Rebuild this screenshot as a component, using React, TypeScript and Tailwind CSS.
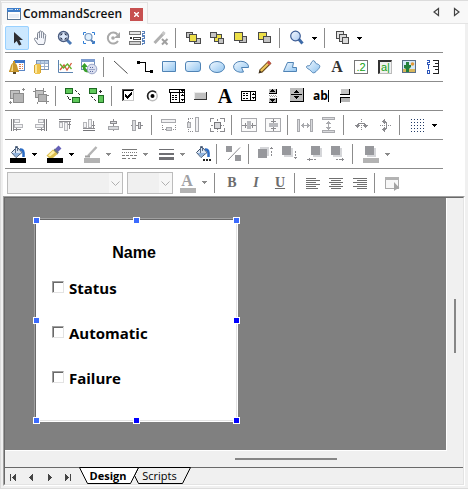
import type { ReactNode } from "react";

type BoxProps = { x: number; y: number; w: number; h: number; s: string; f: string };

/* Outlined rectangle on whole pixels */
function Box({ x, y, w, h, s, f }: BoxProps) {
  return (
    <>
      <rect x={x} y={y} width={w} height={h} fill={s} />
      <rect x={x + 1} y={y + 1} width={w - 2} height={h - 2} fill={f} />
    </>
  );
}

function Fill({ d, c }: { d: string; c: string }) {
  return <path d={d} fill={c} />;
}

function Line({ d, c, w = 1, dash }: { d: string; c: string; w?: number; dash?: string }) {
  return <path d={d} fill="none" stroke={c} strokeWidth={w} strokeDasharray={dash} />;
}

function Glyph({ children, smooth = false }: { children: ReactNode; smooth?: boolean }) {
  return (
    <svg
      viewBox="0 0 24 24"
      className="block size-6"
      shapeRendering={smooth ? "auto" : "crispEdges"}
      aria-hidden="true"
    >
      {children}
    </svg>
  );
}

function Tool({ label, active = false, children }: { label: string; active?: boolean; children: ReactNode }) {
  return (
    <button
      type="button"
      title={label}
      aria-label={label}
      className={
        active
          ? "size-6 shrink-0 rounded-xs bg-[#cce8ff] outline-1 -outline-offset-1 outline-[#99d1ff]"
          : "size-6 shrink-0"
      }
    >
      {children}
    </button>
  );
}

function Drop({ label, dim = false }: { label: string; dim?: boolean }) {
  return (
    <button type="button" aria-label={label} className="flex h-6 w-[13px] shrink-0 items-center pl-[3px]">
      <svg viewBox="0 0 5 3" className="block h-[3px] w-[5px]" shapeRendering="crispEdges" aria-hidden="true">
        <path d="M0 0H5V1H4V2H3V3H2V2H1V1H0Z" fill={dim ? "#8a8a8a" : "#000"} />
      </svg>
    </button>
  );
}

function Sep() {
  return <span className="ml-0.5 mr-[5px] h-5 w-px shrink-0 bg-[#8c8c8c]" />;
}

function Row({ children, last = false }: { children: ReactNode; last?: boolean }) {
  return (
    <div
      className={
        last
          ? "ml-0.5 mr-[22px] flex h-[27px] items-center"
          : "ml-0.5 mr-[22px] flex h-[29px] items-center border-b border-[#8c8c8c]"
      }
    >
      {children}
    </div>
  );
}

const Y = "#ecdf48";
const G = "#c4c4c4";
const D = "#4a4a4a";
const M = "#8b8b8f";
const L = "#d9dadd";
const BLUE = "#4f83b5";

function Lens({ x, y, r, tip }: { x: number; y: number; r: number; tip: number }) {
  return (
    <>
      <Line d={`M${x + r * 0.7} ${y + r * 0.7}L${tip} ${tip}`} c="#3d6aa8" w={3} />
      <circle cx={x} cy={y} r={r} fill="url(#lens)" stroke="#3c5c94" strokeWidth="1.2" />
    </>
  );
}

function Bucket({ children }: { children?: ReactNode }) {
  return (
    <Glyph smooth>
      <path d="M6.500 10.500L12 5L17 10.500L11 15.500Z" fill="#dbe6f5" stroke="#3a4d68" />
      <path d="M7.500 11H16L11 15Z" fill="#8fb2dc" />
      <Line d="M10.500 11V4.500H12.500V9" c="#5b6d86" />
      <Line d="M15 7.500C18 7 19 9 18.500 15" c="#2c6cc4" w={2.5} />
      {children}
    </Glyph>
  );
}

function Stack({ back, front, fb, ff }: { back: number[][]; front: number[][]; fb: string; ff: string }) {
  return (
    <Glyph>
      {back.map(([x, y, w, h]) => (
        <Box key={`b${x}`} x={x} y={y} w={w} h={h} s={D} f={fb} />
      ))}
      {front.map(([x, y, w, h]) => (
        <Box key={`f${x}`} x={x} y={y} w={w} h={h} s={D} f={ff} />
      ))}
    </Glyph>
  );
}

function Curve({ d }: { d: string }) {
  return (
    <Glyph smooth>
      <path d={d} fill="url(#sky)" stroke={BLUE} />
    </Glyph>
  );
}

function Lines({ rows }: { rows: number[][] }) {
  return (
    <Glyph>
      {rows.map(([x, w], i) => (
        <rect key={i} x={x} y={7 + i * 2} width={w} height="1" fill="#6f6f6f" />
      ))}
    </Glyph>
  );
}

function Turn({ children }: { children: ReactNode }) {
  return (
    <Glyph>
      <g transform="rotate(90 12 12)">{children}</g>
    </Glyph>
  );
}

function StandardRow() {
  return (
    <Row>
      <Tool label="Select" active>
        <Glyph smooth>
          <Fill d="M9 6V17.500L11.700 15L14 19.500L16.500 18.500L14.300 14H18Z" c="#2e2e33" />
        </Glyph>
      </Tool>
      <Tool label="Pan">
        <Glyph smooth>
          <path
            d="M9 18.500L5.500 13.500C5 12 6.500 11.500 7.500 12.500L8.500 13.500V7.500C8.500 6 10.300 6 10.400 7.500V6C10.500 4.500 12.500 4.500 12.500 6V6.500C12.700 5.300 14.500 5.500 14.500 7V8.500C15 7.500 16.800 7.800 16.700 9.500L16 15.500L15 18.500Z"
            fill="#f4f6fb"
            stroke="#7d8492"
          />
          <Line d="M10.500 7.500V12M12.500 6.500V12M14.500 8V12.500" c="#8b92a0" />
        </Glyph>
      </Tool>
      <Tool label="Zoom to fit">
        <Glyph smooth>
          <Line d="M14 14L18 18" c="#4a78b4" w={3} />
          <circle cx="10.500" cy="10.500" r="5" fill="#dce8fa" stroke="#4a5c80" strokeWidth="1.400" />
          <Fill d="M7.500 7.500H10L7.500 10ZM13.500 7.500V10L11 7.500ZM7.500 13.500V11L10 13.500ZM13.500 13.500H11L13.500 11Z" c="#16213c" />
        </Glyph>
      </Tool>
      <Tool label="Zoom to selection">
        <Glyph smooth>
          <Line d="M6.500 9V6.500H9M15 6.500H17.500V9M6.500 15V17.500H9M15 17.500H17.500V15" c="#2f7fd8" />
          <Line d="M13.500 13.500L17 17" c="#4a78b4" w={2} />
          <circle cx="11.500" cy="11" r="3.500" fill="#e0effc" stroke="#7596bf" strokeWidth="1.200" />
        </Glyph>
      </Tool>
      <Tool label="Rotate">
        <Glyph smooth>
          <Line d="M16.500 8.500A5.500 5.500 0 1 0 17 15" c="#a9a9a9" w={2} />
          <Fill d="M19 6V12H13Z" c="#a9a9a9" />
          <circle cx="12" cy="12" r="1.800" fill="#a9a9a9" />
        </Glyph>
      </Tool>
      <Tool label="Tab order">
        <Glyph>
          <Box x={4} y={5} w={12} h={4} s="#777" f="#e8e8e8" />
          <Box x={8} y={11} w={8} h={3} s="#444" f="#fff" />
          <rect x="5" y="11" width="2" height="2" fill="#333" />
          <Box x={4} y={15} w={12} h={4} s="#777" f="#d0d0d0" />
          <Line d="M17 5.500H19.500V7.500H17.500V9.500H20M17 10.500H19.500V12.500H17.500V14.500H20M17 15.500H19.500V17.500H17.500V19" c="#5b83bd" />
        </Glyph>
      </Tool>
      <Tool label="Clear format">
        <Glyph smooth>
          <Line d="M5.500 17L15 7" c="#b0b0b0" w={3} />
          <Line d="M13.500 8.500L15.500 6" c="#c9c9c9" w={3} />
          <Line d="M13 13L18.500 18.500M18.500 13L13 18.500" c="#a0a0a0" w={2} />
        </Glyph>
      </Tool>
      <Sep />
      <Tool label="Bring to front">
        <Stack back={[[5, 6, 7, 6], [13, 12, 7, 6]]} front={[[8, 8, 8, 8]]} fb={G} ff={Y} />
      </Tool>
      <Tool label="Send to back">
        <Stack back={[[9, 8, 8, 8]]} front={[[5, 6, 7, 6], [13, 12, 6, 6]]} fb={Y} ff={G} />
      </Tool>
      <Tool label="Bring forward">
        <Stack back={[[10, 10, 8, 7]]} front={[[5, 6, 9, 9]]} fb={G} ff={Y} />
      </Tool>
      <Tool label="Send backward">
        <Stack back={[[5, 6, 9, 8]]} front={[[10, 10, 8, 7]]} fb={Y} ff={G} />
      </Tool>
      <Sep />
      <Tool label="Zoom">
        <Glyph smooth>
          <Lens x={10.5} y={10} r={4.8} tip={17.5} />
        </Glyph>
      </Tool>
      <Drop label="Zoom options" />
      <Sep />
      <Tool label="Layers">
        <Stack back={[[6, 5, 8, 8]]} front={[[9, 8, 8, 8], [12, 11, 7, 7]]} fb="#e3e3e3" ff="#dadada" />
      </Tool>
      <Drop label="Layer options" />
    </Row>
  );
}

function DrawingRow() {
  return (
    <Row>
      <Tool label="Alarm view">
        <Glyph smooth>
          <Box x={9} y={5} w={11} h={11} s="#5b86c6" f="#fff" />
          <rect x="9" y="5" width="11" height="3" fill="#3c73c8" />
          <Line d="M14 9.500H18M14 11.500H18M14 13.500H18" c="#e08050" dash="2 1" />
          <Fill d="M8 6H10V8C13 9 12 14 14 16V17H4V16C6 14 5 9 8 8Z" c="#c8962c" />
          <Fill d="M8 8C7 10 7 13 6 16H8Z" c="#f6dc84" />
          <rect x="8" y="17" width="3" height="2" fill="#5a4a28" />
        </Glyph>
      </Tool>
      <Tool label="Table view">
        <Glyph>
          <Box x={7} y={5} w={13} h={10} s="#7b93b5" f="#fff" />
          <rect x="8" y="6" width="11" height="2" fill="#b9cfe8" />
          <Line d="M8 8.500H19M8 11.500H19M11.500 6V14M15.500 6V14" c="#9db0cb" />
          <rect x="5" y="10" width="7" height="8" fill="#d7a52e" />
          <rect x="6" y="9" width="5" height="10" fill="#efc34c" />
          <rect x="6" y="10" width="2" height="8" fill="#fbe79f" />
        </Glyph>
      </Tool>
      <Tool label="Trend view">
        <Glyph smooth>
          <Line d="M5.500 5V17.500H20" c="#5b83b0" />
          <Line d="M7 15L11 10L14 15L18.500 8" c="#d65a3c" w={1.3} />
          <Line d="M7 9L10.500 13L14.500 9L18.500 14" c="#62b02a" w={1.3} />
        </Glyph>
      </Tool>
      <Tool label="Recipe view">
        <Glyph smooth>
          <Box x={4} y={4} w={14} h={11} s="#6f8db8" f="#fff" />
          <rect x="4" y="4" width="14" height="3" fill="#7d9cd0" />
          <Line d="M7 11C7 16 9 16 12 16" c="#38a028" w={3} />
          <Fill d="M4 12L7.500 8L11 12Z" c="#38a028" />
          <circle cx="15" cy="14" r="4.800" fill="#dadff0" stroke="#9ba5c8" />
          <Line d="M13 12.500H17M12.500 14.500H18M13 16.500H17" c="#5d6aa0" dash="1 1" />
        </Glyph>
      </Tool>
      <Sep />
      <Tool label="Line">
        <Glyph smooth>
          <Line d="M5 6L18.500 18.500" c="#505050" />
        </Glyph>
      </Tool>
      <Tool label="Connector">
        <Glyph>
          <Line d="M5 7.500H12.500V16.500H19" c="#000" />
          <Fill d="M4 6H7V9H4ZM17 15H20V18H17Z" c="#000" />
        </Glyph>
      </Tool>
      <Tool label="Rectangle"><Curve d="M5.500 6.500H18.500V16.500H5.500Z" /></Tool>
      <Tool label="Rounded rectangle">
        <Curve d="M7 6.500H17Q19.500 6.500 19.500 9V14Q19.500 16.500 17 16.500H7Q4.500 16.500 4.500 14V9Q4.500 6.500 7 6.500Z" />
      </Tool>
      <Tool label="Ellipse"><Curve d="M4.500 12A7.500 5.500 0 1 1 19.500 12A7.500 5.500 0 1 1 4.500 12Z" /></Tool>
      <Tool label="Pie"><Curve d="M12.500 12.500L14.500 17A7.500 5.500 0 1 1 19.500 12.500Z" /></Tool>
      <Tool label="Pencil">
        <Glyph smooth>
          <Line d="M7.500 16.500L17 7" c="#6b4a1c" w={4} />
          <Line d="M7.800 16L15.500 8.300" c="#f0c95c" w={2.2} />
          <Line d="M15 9L17 7" c="#c8524a" w={3.5} />
          <Fill d="M5.500 18.500L6.500 15L9 17.500Z" c="#3c2c18" />
        </Glyph>
      </Tool>
      <Tool label="Polygon"><Curve d="M6.500 16.500L10.500 7.500H16.500L15.500 12.500H19.500V16.500Z" /></Tool>
      <Tool label="Freeform">
        <Curve d="M5.500 11.500C6 10 8 12 9.500 9.500C11 5.500 13 4.500 14 7C14.500 9 16 8.500 17.500 9.500C20 11 18.500 13 16 15.500C13 19 11.500 18 10 16C8.500 14 5 13.500 5.500 11.500Z" />
      </Tool>
      <Tool label="Text">
        <span className="block font-['Liberation_Serif',serif] text-base leading-6 font-bold text-[#333]">A</span>
      </Tool>
      <Tool label="Numeric display">
        <span className="mx-auto block h-[14px] w-[14px] border border-[#777] font-['Liberation_Sans',sans-serif] text-[11px] leading-3 text-[#12a012]">
          .2
        </span>
      </Tool>
      <Tool label="Alphanumeric display">
        <span className="mx-auto block h-[14px] w-[14px] border border-t-2 border-l-2 border-[#bbb] border-t-[#333] border-l-[#333] bg-[#f0f0f0] font-['Liberation_Sans',sans-serif] text-[11px] leading-[10px] text-[#12a012]">
          a|
        </span>
      </Tool>
      <Tool label="Picture">
        <Glyph smooth>
          <Box x={5} y={5} w={14} h={13} s="#5a6f88" f="#d4e8f8" />
          <rect x="6" y="14" width="12" height="3" fill="#d8b65c" />
          <Fill d="M9 7H12V10H14V12L12 14V17H9V14L7 13V10H9Z" c="#23803c" />
          <circle cx="15.500" cy="9" r="1.800" fill="#e49a38" />
        </Glyph>
      </Tool>
      <Tool label="Scale">
        <Glyph>
          <Line d="M6 5.500H8.500V7.500H6.500V9H9M7.500 10V14M6 15.500H8.500V18.500H6.500V15" c="#2c55b8" />
          <Line d="M17.500 5V19M12 5.500H18M14 8.500H18M12 11.500H18M14 14.500H18M12 18.500H18" c="#222" />
        </Glyph>
      </Tool>
    </Row>
  );
}

function ControlsRow() {
  return (
    <Row>
      <Tool label="Group">
        <Glyph>
          <Box x={5} y={6} w={10} h={9} s="#8c8c8c" f="#c2c2c2" />
          <Box x={8} y={9} w={11} h={10} s="#8c8c8c" f="#b4b4b4" />
          <Fill d="M17 5H20V6H17ZM18 4H19V7H18ZM4 18H7V19H4ZM5 17H6V20H5Z" c="#8c8c8c" />
        </Glyph>
      </Tool>
      <Tool label="Ungroup">
        <Glyph>
          <Box x={6} y={6} w={9} h={8} s="#8c8c8c" f="#c2c2c2" />
          <Box x={9} y={10} w={9} h={8} s="#8c8c8c" f="#b4b4b4" />
          <Fill d="M4 7H6V8H4ZM6 4H7V6H6ZM14 4H15V6H14ZM15 7H17V8H15ZM18 11H20V12H18ZM17 18H18V20H17ZM18 17H20V18H18ZM8 18H9V20H8Z" c="#8c8c8c" />
        </Glyph>
      </Tool>
      <Sep />
      <Tool label="Replace">
        <Glyph>
          <Line d="M14 6L19 11M6 12L11 18" c="#333" dash="1 1" />
          <Box x={4} y={4} w={8} h={6} s="#1f6a24" f="#5fc85a" />
          <Box x={11} y={13} w={8} h={6} s="#1f6a24" f="#5fc85a" />
        </Glyph>
      </Tool>
      <Tool label="Duplicate">
        <Glyph>
          <Line d="M6 12L12 18" c="#333" dash="1 1" />
          <Box x={4} y={4} w={8} h={6} s="#1f6a24" f="#5fc85a" />
          <Box x={13} y={11} w={6} h={8} s="#1f6a24" f="#5fc85a" />
          <Fill d="M14 7H17V8H14ZM15 6H16V9H15Z" c="#333" />
        </Glyph>
      </Tool>
      <Sep />
      <Tool label="Check box">
        <Glyph>
          <Box x={5} y={5} w={12} h={12} s="#c8c8c8" f="#fff" />
          <Fill d="M5 5H17V6H6V17H5Z" c="#555" />
          <Fill d="M6 6H16V7H7V16H6Z" c="#000" />
          <Line d="M8 10.500L10.500 13.500L15 8.500" c="#000" w={2} />
        </Glyph>
      </Tool>
      <Tool label="Option button">
        <Glyph smooth>
          <circle cx="11.500" cy="12" r="4.700" fill="#fff" stroke="#bdbdbd" strokeWidth="1.500" />
          <Line d="M8 15.500A4.800 4.800 0 0 1 15 8.500" c="#222" w={1.6} />
          <circle cx="11.500" cy="12" r="2" fill="#000" />
        </Glyph>
      </Tool>
      <Tool label="Combo box">
        <Glyph>
          <Box x={4} y={5} w={16} h={4} s="#000" f="#fff" />
          <Box x={5} y={8} w={15} h={11} s="#000" f="#fff" />
          <rect x="14" y="5" width="1" height="13" fill="#000" />
          <Line d="M7 11.500H12M7 13.500H12M7 15.500H12" c="#000" dash="2 1" />
          <Fill d="M16 6H19V7H18V8H17V7H16ZM17 10H18V11H19V12H16V11H17ZM16 15H19V16H18V17H17V16H16Z" c="#000" />
        </Glyph>
      </Tool>
      <Tool label="Button">
        <Glyph>
          <rect x="5" y="8" width="13" height="8" fill="#333" />
          <rect x="5" y="8" width="12" height="7" fill="#ececec" />
          <rect x="6" y="9" width="11" height="6" fill="#c0c0c0" />
        </Glyph>
      </Tool>
      <Tool label="Label">
        <span className="block font-['Liberation_Serif',serif] text-xl leading-6 font-bold text-black">A</span>
      </Tool>
      <Tool label="List box">
        <Glyph>
          <Box x={4} y={7} w={15} h={10} s="#000" f="#fff" />
          <rect x="13" y="7" width="1" height="10" fill="#000" />
          <Line d="M6 9.500H12M6 11.500H12M6 14.500H12" c="#000" dash="2 1" />
          <Fill d="M16 9H17V10H18V11H15V10H16ZM15 13H18V14H17V15H16V14H15Z" c="#000" />
        </Glyph>
      </Tool>
      <Tool label="Scroll bar">
        <Glyph>
          <rect x="8" y="5" width="8" height="5" fill="#b8b8b8" />
          <rect x="8" y="14" width="8" height="5" fill="#b8b8b8" />
          <Line d="M8 9.500H15.500V5M8 18.500H15.500V14" c="#000" />
          <Line d="M8 11.500H16M9 12.500H16" c="#999" dash="1 1" />
          <Fill d="M11 5H12V6H13V7H14V8H9V7H10V6H11ZM9 15H14V16H13V17H12V18H11V17H10V16H9Z" c="#000" />
        </Glyph>
      </Tool>
      <Tool label="Spin button">
        <Glyph>
          <rect x="5" y="4" width="14" height="14" fill="#000" />
          <rect x="5" y="4" width="13" height="13" fill="#bcbcbc" />
          <Fill d="M6 10H17V11H6ZM11 6H12V7H13V8H14V9H9V8H10V7H11ZM9 12H14V13H13V14H12V15H11V14H10V13H9Z" c="#000" />
        </Glyph>
      </Tool>
      <Tool label="Text box">
        <span className="flex h-6 items-center justify-center font-['Open_Sans',sans-serif] text-[12px] leading-6 font-bold text-black">
          ab
          <span className="h-3 w-px bg-black" />
        </span>
      </Tool>
      <Tool label="Toggle button">
        <Glyph>
          <rect x="8" y="5" width="9" height="5" fill="#c4c4c4" />
          <Line d="M7 10.500H16.500V5" c="#000" />
          <rect x="8" y="14" width="9" height="4" fill="#b4b4b4" />
          <Line d="M17 13.500H7.500V19" c="#000" />
        </Glyph>
      </Tool>
    </Row>
  );
}

function LeftEdge() {
  return (
    <>
      <Fill d="M6 6H7V18H6Z" c="#77777b" />
      <Fill d="M8 6H9V18H8Z" c={M} />
      <Box x={9} y={6} w={6} h={4} s="#b5b6ba" f="#f1f1f3" />
      <Box x={9} y={11} w={9} h={4} s="#b5b6ba" f="#f1f1f3" />
      <Fill d="M9 16H11V15H12V16H16V17H12V18H11V17H9Z" c={M} />
    </>
  );
}

function CenterEdge() {
  return (
    <>
      <Line d="M12.500 6V18" c="#8b8b8f" />
      <Box x={9} y={8} w={7} h={3} s="#8b8b8f" f={L} />
      <Box x={7} y={13} w={11} h={4} s="#a5a6aa" f={L} />
    </>
  );
}

function SameSize() {
  return (
    <>
      <Box x={4} y={6} w={15} h={4} s="#a9aaae" f="#f1f1f3" />
      <Line d="M5.500 12V18M18.500 12V18M6 16.500H18" c={M} dash="1 1" />
      <Box x={9} y={14} w={6} h={4} s="#a9aaae" f={L} />
    </>
  );
}

function BoxSpread() {
  return (
    <>
      <Box x={4} y={5} w={16} h={14} s="#a9aaae" f="#fafafa" />
      <rect x="10" y="8" width="4" height="8" fill="#b9babe" />
      <Line d="M5 12.500H10M14 12.500H19M8.500 10V15M15.500 10V15" c={M} />
    </>
  );
}

function Spacing() {
  return (
    <>
      <Box x={4} y={6} w={3} h={13} s="#a9aaae" f={L} />
      <Box x={17} y={6} w={3} h={13} s="#a9aaae" f={L} />
      <Fill d="M8 12H9V11H10V10H11V12H14V10H15V11H16V12H17V13H16V14H15V15H14V13H11V15H10V14H9V13H8Z" c="#a9aaae" />
    </>
  );
}

function Flip() {
  return (
    <>
      <Line d="M12.500 6V18" c={M} dash="1 1" />
      <Line d="M8.500 13V11.500H9.500V10.500H15.500V11.500H16.500V13" c={M} />
      <Fill d="M6 12H11V13H10V14H9V15H8V14H7V13H6ZM14 12H19V13H18V14H17V15H16V14H15V13H14Z" c={M} />
    </>
  );
}

function ArrangeRow() {
  const dots: ReactNode[] = [];
  for (let y = 0; y < 5; y++) {
    for (let x = 0; x < 5; x++) {
      dots.push(<rect key={`${x}-${y}`} x={6 + x * 3} y={6 + y * 3} width="1" height="1" fill="#223a66" />);
    }
  }
  return (
    <Row>
      <Tool label="Align left"><Glyph><LeftEdge /></Glyph></Tool>
      <Tool label="Align right"><Glyph><g transform="matrix(-1 0 0 1 24 0)"><LeftEdge /></g></Glyph></Tool>
      <Tool label="Align top"><Glyph><g transform="matrix(0 1 1 0 0 0)"><LeftEdge /></g></Glyph></Tool>
      <Tool label="Align bottom"><Glyph><g transform="matrix(0 -1 1 0 0 24)"><LeftEdge /></g></Glyph></Tool>
      <Tool label="Center horizontally"><Glyph><CenterEdge /></Glyph></Tool>
      <Tool label="Center vertically"><Turn><CenterEdge /></Turn></Tool>
      <Sep />
      <Tool label="Same width"><Glyph><SameSize /></Glyph></Tool>
      <Tool label="Same height"><Turn><SameSize /></Turn></Tool>
      <Tool label="Same size">
        <Glyph>
          <Line d="M5.500 9V5.500H9M15 5.500H19.500V9M5.500 15V18.500H9M15 18.500H19.500V15" c={M} />
          <Line d="M12.500 6V19M6 12.500H19" c={M} dash="2 1" />
          <Box x={9} y={9} w={7} h={7} s="#77777b" f={L} />
        </Glyph>
      </Tool>
      <Sep />
      <Tool label="Center in window horizontally"><Glyph><BoxSpread /></Glyph></Tool>
      <Tool label="Center in window vertically">
        <Glyph>
          <Box x={4} y={5} w={16} h={14} s="#a9aaae" f="#fafafa" />
          <rect x="8" y="10" width="9" height="4" fill="#b9babe" />
          <Line d="M12.500 6V10M12.500 14V18M10 8.500H15M10 15.500H15" c={M} />
        </Glyph>
      </Tool>
      <Sep />
      <Tool label="Space evenly across"><Glyph><Spacing /></Glyph></Tool>
      <Tool label="Space evenly down"><Turn><Spacing /></Turn></Tool>
      <Sep />
      <Tool label="Flip horizontally"><Glyph><Flip /></Glyph></Tool>
      <Tool label="Flip vertically">
        <Glyph>
          <g transform="rotate(90 12 12)">
            <Flip />
          </g>
        </Glyph>
      </Tool>
      <Sep />
      <Tool label="Grid"><Glyph>{dots}</Glyph></Tool>
      <Drop label="Grid options" />
    </Row>
  );
}

function OrderIcon({ x, y, arrow, children }: { x: number; y: number; arrow?: string; children?: ReactNode }) {
  return (
    <Glyph>
      <rect x={x + 2} y={y === 4 ? 6 : 5} width="9" height="9" fill="#d5d6d9" />
      <rect x={x} y={y} width="9" height="9" fill="#97989c" />
      {arrow && <Fill d={arrow} c={M} />}
      {children}
    </Glyph>
  );
}

function ColorRow() {
  return (
    <Row>
      <Tool label="Fill color">
        <Bucket><rect x="5" y="16" width="16" height="5" fill="#000" /></Bucket>
      </Tool>
      <Drop label="Fill color options" />
      <Tool label="Brush color">
        <Glyph smooth>
          <Line d="M14 9L18 5" c="#6560b8" w={4} />
          <Line d="M12 7.500L16 11.500" c="#67707c" w={2.5} />
          <Fill d="M11 7.500L15.500 12L11 16H7L4.500 13.500Z" c="#dcbf50" />
          <Fill d="M11 8.500L13 10.500L8 14.500L6 13.500Z" c="#fff0a8" />
          <rect x="5" y="16" width="16" height="5" fill="#000" />
        </Glyph>
      </Tool>
      <Drop label="Brush color options" />
      <Tool label="Line color">
        <Glyph smooth>
          <Line d="M9 14L17.500 5" c="#b4b4b4" w={2.5} />
          <Line d="M6 14.500H11" c="#a0a0a0" w={2} />
          <rect x="5" y="16" width="16" height="5" fill="#b3b3b3" />
        </Glyph>
      </Tool>
      <Drop label="Line color options" dim />
      <Tool label="Line style">
        <Glyph>
          <Line d="M6 7.500H21" c="#7a7a7a" />
          <Line d="M6 10.500H21" c="#7a7a7a" dash="1 1" />
          <Line d="M6 13.500H21" c="#7a7a7a" dash="3 1" />
          <Line d="M6 16.500H21" c="#7a7a7a" dash="4 2 2 2" />
        </Glyph>
      </Tool>
      <Drop label="Line style options" dim />
      <Tool label="Line width">
        <Glyph>
          <Fill d="M6 7H21V8H6ZM6 11H21V13H6ZM6 15H21V18H6Z" c="#6f6f73" />
        </Glyph>
      </Tool>
      <Drop label="Line width options" dim />
      <Tool label="Fill effects">
        <Bucket><Line d="M13 18H21" c="#222" w={2} dash="2 1" /></Bucket>
      </Tool>
      <Sep />
      <Tool label="Swap">
        <Glyph smooth>
          <rect x="4" y="4" width="6" height="6" fill="#97989c" />
          <rect x="13" y="13" width="6" height="6" fill="#97989c" />
          <Line d="M6 18L18 5.500" c={M} />
        </Glyph>
      </Tool>
      <Sep />
      <Tool label="Move up"><OrderIcon x={4} y={7} arrow="M16 6H17V5H18V6H19V7H16ZM17 9H18V11H17ZM17 12H18V14H17Z" /></Tool>
      <Tool label="Move down"><OrderIcon x={4} y={4} arrow="M17 9H18V11H17ZM17 12H18V14H17ZM16 15H19V16H18V17H17V16H16Z" /></Tool>
      <Tool label="Move left"><OrderIcon x={9} y={4} arrow="M5 17H7V16H8V17H11V18H8V19H7V18H5ZM12 17H14V18H12Z" /></Tool>
      <Tool label="Move right"><OrderIcon x={5} y={4} arrow="M10 17H12V18H10ZM13 17H16V16H17V17H18V18H17V19H16V18H13Z" /></Tool>
      <Sep />
      <Tool label="Shadow color">
        <OrderIcon x={7} y={4}><rect x="5" y="16" width="16" height="5" fill="#b3b3b3" /></OrderIcon>
      </Tool>
      <Drop label="Shadow color options" dim />
    </Row>
  );
}

function Picker({ label, wide = false }: { label: string; wide?: boolean }) {
  return (
    <span
      className={
        wide
          ? "relative ml-0.5 block h-[22px] w-[116px] shrink-0"
          : "relative ml-1 block h-[22px] w-[46px] shrink-0"
      }
    >
      <select
        disabled
        aria-label={label}
        className="block size-full appearance-none border border-[#bcbcbc] bg-[#f0f0f0] opacity-100"
      />
      <svg
        viewBox="0 0 13 20"
        className="pointer-events-none absolute top-px right-px h-5 w-[13px] bg-[#f7f7f7]"
        aria-hidden="true"
      >
        <path d="M2.500 8.500L6.500 12.500L10.500 8.500" fill="none" stroke="#b0b0b0" />
      </svg>
    </span>
  );
}

function TextRow() {
  return (
    <Row last>
      <Picker label="Font name" wide />
      <Picker label="Font size" />
      <span className="w-0.5 shrink-0" />
      <Tool label="Font color">
        <span className="relative block size-6 font-['Liberation_Serif',serif] text-base leading-5 font-bold text-[#a0a0a4]">
          A
          <span className="absolute bottom-0.5 left-[5px] h-[5px] w-4 bg-[#b3b3b3]" />
        </span>
      </Tool>
      <Drop label="Font color options" dim />
      <Sep />
      <Tool label="Bold">
        <span className="block font-['Liberation_Serif',serif] text-sm leading-6 font-bold text-[#6c6c6c]">B</span>
      </Tool>
      <Tool label="Italic">
        <span className="block font-['Liberation_Serif',serif] text-sm leading-6 font-bold text-[#6c6c6c] italic">I</span>
      </Tool>
      <Tool label="Underline">
        <span className="block font-['Liberation_Serif',serif] text-sm leading-6 font-bold text-[#6c6c6c] underline">U</span>
      </Tool>
      <Sep />
      <Tool label="Align text left"><Lines rows={[[6, 10], [6, 14], [6, 10], [6, 14], [6, 10], [6, 12]]} /></Tool>
      <Tool label="Align text center"><Lines rows={[[5, 14], [7, 10], [5, 14], [7, 10], [5, 14], [7, 10]]} /></Tool>
      <Tool label="Align text right"><Lines rows={[[5, 14], [9, 10], [5, 14], [9, 10], [5, 14], [9, 10]]} /></Tool>
      <Sep />
      <Tool label="Properties">
        <Glyph smooth>
          <Box x={5} y={6} w={14} h={12} s="#a9a9a9" f="#f7f7f7" />
          <rect x="5" y="6" width="14" height="3" fill="#b3b3b3" />
          <Fill d="M14 11V20L16 18.500L19.500 17Z" c="#a3a3a3" />
        </Glyph>
      </Tool>
    </Row>
  );
}

function Caret({ d }: { d: string }) {
  return (
    <svg viewBox="0 0 10 10" className="block size-[10px]" aria-hidden="true">
      <path d={d} fill="none" stroke="#444" strokeWidth="1.200" />
    </svg>
  );
}

function TabStrip() {
  return (
    <div className="flex h-6 border-t border-b border-t-[#dcdcdc] border-b-[#e4e4e4] bg-[#f8f8f8]">
      <div className="mt-px flex h-[23px] items-center gap-0.5 border border-b-0 border-[#e4e4e4] bg-[#f9f9f9] pr-1 pl-[5px]">
        <svg viewBox="0 0 14 12" className="h-3 w-[14px]" shapeRendering="crispEdges" aria-hidden="true">
          <Box x={0} y={0} w={14} h={12} s="#5c7795" f="#fff" />
          <rect x="0" y="0" width="14" height="4" fill="#3f7ec9" />
          <rect x="1" y="1" width="5" height="1" fill="#9cc6f2" />
          <rect x="8" y="1" width="1" height="1" fill="#fff" />
          <rect x="10" y="1" width="1" height="1" fill="#fff" />
          <rect x="12" y="1" width="1" height="1" fill="#f2b05c" />
          <rect x="2" y="6" width="10" height="4" fill="#e8eef6" />
        </svg>
        <span className="w-[105px] text-[12px] leading-5 font-semibold whitespace-nowrap text-[#111]">CommandScreen</span>
        <button type="button" aria-label="Close" className="flex size-[13px] items-center justify-center bg-[#c75050]">
          <svg viewBox="0 0 5 5" className="size-[5px]" aria-hidden="true">
            <path d="M0 0L5 5M5 0L0 5" stroke="#fff" strokeWidth="1.400" />
          </svg>
        </button>
      </div>
      <div className="mr-[7px] ml-auto flex items-center gap-[10px]">
        <button type="button" aria-label="Previous document"><Caret d="M7.500 1.500V8.500L3 5Z" /></button>
        <button type="button" aria-label="Next document"><Caret d="M3.500 1.500V8.500L8 5Z" /></button>
      </div>
    </div>
  );
}

function Handle({ place }: { place: string }) {
  return <span className={`absolute size-[7px] border border-white ${place}`} />;
}

function Check({ label }: { label: string }) {
  return (
    <label className="flex h-[22px] items-center gap-[5px] font-['Open_Sans',sans-serif] text-[15px] leading-[22px] font-bold text-black">
      <input
        type="checkbox"
        className="-mt-0.5 size-3 appearance-none border border-t-[#a0a0a0] border-r-[#e3e3e3] border-b-[#e3e3e3] border-l-[#a0a0a0] bg-white shadow-[inset_1px_1px_0_#696969]"
      />
      {label}
    </label>
  );
}

function Workspace() {
  return (
    <div className="grid flex-1 grid-cols-[1fr_16px] grid-rows-[1fr_16px] bg-[#f0f0f0]">
      <div className="border-r border-b border-white bg-[#808080] pt-5 pb-7 pl-[29px]">
        <div className="relative h-[204px] w-[204px] border border-t-[#a0a0a0] border-r-white border-b-white border-l-[#a0a0a0]">
          <div className="flex h-full flex-col border border-t-[#696969] border-r-[#e3e3e3] border-b-[#e3e3e3] border-l-[#696969] bg-white px-4 pt-[22px]">
            <p className="mb-[13px] pr-1 text-center font-['Liberation_Sans',sans-serif] text-base leading-[22px] font-bold text-black">
              Name
            </p>
            <div className="flex flex-col gap-[23px]">
              <Check label="Status" />
              <Check label="Automatic" />
              <Check label="Failure" />
            </div>
          </div>
          <Handle place="-top-0.5 -left-0.5 bg-[#3b6bff]" />
          <Handle place="-top-0.5 left-[98px] bg-[#3b6bff]" />
          <Handle place="-top-0.5 left-[198px] bg-[#3b6bff]" />
          <Handle place="top-[98px] -left-0.5 bg-[#3b6bff]" />
          <Handle place="top-[98px] left-[198px] bg-[#0000ff]" />
          <Handle place="top-[198px] -left-0.5 bg-[#3b6bff]" />
          <Handle place="top-[198px] left-[98px] bg-[#0000ff]" />
          <Handle place="top-[198px] left-[198px] bg-[#0000ff]" />
        </div>
      </div>
      <div className="flex justify-center pt-[101px]">
        <span className="h-[54px] w-0.5 bg-[#868686]" />
      </div>
      <div className="flex items-center pl-[52%]">
        <span className="h-0.5 w-[102px] bg-[#868686]" />
      </div>
    </div>
  );
}

function Nav({ label, d }: { label: string; d: string }) {
  return (
    <button type="button" aria-label={label} className="flex h-4 w-[18px] items-center justify-center pt-0.5 pr-0.5">
      <svg viewBox="0 0 7 7" className="size-[7px]" shapeRendering="crispEdges" aria-hidden="true">
        <path d={d} fill="#444" />
      </svg>
    </button>
  );
}

function SheetTabs() {
  return (
    <div className="flex h-[17px] border-t border-[#696969] bg-[#f0f0f0] text-[11px] leading-[15px] text-black">
      <Nav label="First" d="M0 0H1V7H0ZM6 0V7H5V6H4V5H3V4H2V3H3V2H4V1H5V0Z" />
      <Nav label="Previous" d="M5 0V7H4V6H3V5H2V4H1V3H2V2H3V1H4V0Z" />
      <Nav label="Next" d="M2 0V7H3V6H4V5H5V4H6V3H5V2H4V1H3V0Z" />
      <Nav label="Last" d="M6 0H7V7H6ZM1 0V7H2V6H3V5H4V4H5V3H4V2H3V1H2V0Z" />
      <div className="ml-0.5 flex" role="tablist">
        <button type="button" role="tab" aria-selected="true" className="relative z-10 -mt-px h-[17px] w-[60px] pr-0.5 font-bold">
          <svg viewBox="0 0 60 17" className="absolute inset-0 h-[17px] w-[60px]" aria-hidden="true">
            <path d="M0.500 0.500L8.500 16.500H51.500L59.500 0.500Z" fill="#fff" stroke="#000" />
          </svg>
          <span className="relative">Design</span>
        </button>
        <button type="button" role="tab" aria-selected="false" className="relative -mt-px -ml-[5px] h-[17px] w-[57px] pr-1.5">
          <svg viewBox="0 0 57 17" className="absolute inset-0 h-[17px] w-[57px]" aria-hidden="true">
            <path d="M4.500 0.500H56.500L48.500 16.500H4.500L0.500 8.500Z" fill="#f0f0f0" stroke="#000" />
          </svg>
          <span className="relative">Scripts</span>
        </button>
      </div>
    </div>
  );
}

export default function App() {
  return (
    <main className="flex min-h-screen flex-col border-b border-l border-[#dcdcdc] bg-[#f0f0f0] font-['Open_Sans',sans-serif]">
      <svg className="absolute size-0" aria-hidden="true">
        <defs>
          <linearGradient id="sky" x1="0" y1="0" x2="1" y2="1">
            <stop offset="0" stopColor="#f2f9ff" />
            <stop offset="1" stopColor="#90c4f0" />
          </linearGradient>
          <linearGradient id="lens" x1="0" y1="0" x2="1" y2="1">
            <stop offset="0" stopColor="#f6faff" />
            <stop offset="1" stopColor="#a9c8f0" />
          </linearGradient>
        </defs>
      </svg>
      <TabStrip />
      <div className="mr-[3px] ml-0.5 flex flex-1 flex-col bg-white" role="toolbar" aria-label="Designer tools">
        <StandardRow />
        <DrawingRow />
        <ControlsRow />
        <ArrangeRow />
        <ColorRow />
        <TextRow />
        <section className="flex flex-1 flex-col border border-t-[#a0a0a0] border-r-white border-b-white border-l-[#a0a0a0]">
          <div className="flex flex-1 flex-col border border-t-[#696969] border-r-[#e3e3e3] border-b-[#e3e3e3] border-l-[#696969]">
            <Workspace />
            <SheetTabs />
          </div>
        </section>
        <div className="h-0.5 bg-[#f0f0f0]" />
      </div>
    </main>
  );
}
